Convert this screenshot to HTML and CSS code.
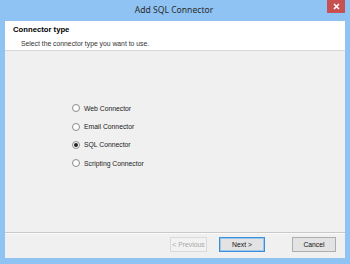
FILE: index.html
```html
<!DOCTYPE html>
<html lang="en">
<head>
    <meta charset="UTF-8">
    <title>Add SQL Connector</title>
    <link rel="stylesheet" href="styles.css">
</head>
<body>
    <div class="window">
        <div class="titlebar">
            <span class="title">Add SQL Connector</span>
            <div class="close-btn">
                <svg width="7" height="7" viewBox="0 0 7 7">
                    <path d="M1 1 L6 6 M6 1 L1 6" stroke="#fff" stroke-width="1.6"/>
                </svg>
            </div>
        </div>
        <div class="client">
            <div class="header">
                <p class="header-title">Connector type</p>
                <p class="header-sub">Select the connector type you want to use.</p>
            </div>
            <div class="content">
                <div class="radio-row"><span class="radio"></span>Web Connector</div>
                <div class="radio-row"><span class="radio"></span>Email Connector</div>
                <div class="radio-row"><span class="radio checked"></span>SQL Connector</div>
                <div class="radio-row"><span class="radio"></span>Scripting Connector</div>
            </div>
            <div class="footer">
                <button class="btn btn-prev" disabled>&lt; Previous</button>
                <button class="btn btn-next">Next &gt;</button>
                <button class="btn btn-cancel">Cancel</button>
            </div>
        </div>
    </div>
</body>
</html>
```

FILE: styles.css
```css
html, body {
    margin: 0;
    padding: 0;
}
body {
    width: 350px;
    height: 264px;
    background: #8fc3f3;
    font-family: "Liberation Sans", Arial, sans-serif;
    font-size: 6.8px;
    color: #1a1a1a;
}
.window {
    width: 350px;
    height: 264px;
    display: flex;
    flex-direction: column;
}
.titlebar {
    position: relative;
    height: 21px;
    display: flex;
    align-items: center;
    justify-content: center;
}
.title {
    font-family: "Noto Sans", "Open Sans", sans-serif;
    font-size: 8.6px;
    color: #2b2b2b;
    margin-top: -1px;
    margin-left: -2px;
}
.close-btn {
    position: absolute;
    top: 0;
    right: 5px;
    width: 18px;
    height: 13px;
    background: #c75050;
    display: flex;
    align-items: center;
    justify-content: center;
}
.client {
    flex: 1;
    margin: 0 5px 6px 5px;
    background: #f0f0f0;
    display: flex;
    flex-direction: column;
}
.header {
    height: 30px;
    background: #fff;
    border-bottom: 1px solid #d8d8d8;
    box-sizing: border-box;
    padding: 4px 0 0 8px;
}
.header p {
    margin: 0;
}
.header-title {
    font-size: 7.7px;
    font-weight: bold;
    color: #000;
    line-height: 10px;
}
.header-sub {
    margin-top: 4px !important;
    padding-left: 8px;
    color: #333;
    line-height: 10px;
}
.content {
    flex: 1;
    padding: 48px 0 0 67px;
}
.radio-row {
    height: 18.4px;
    display: flex;
    align-items: center;
    gap: 4px;
    color: #222;
}
.radio {
    width: 6px;
    height: 6px;
    border: 1px solid #8c8c8c;
    border-radius: 50%;
    background: #fcfcfc;
    display: flex;
    align-items: center;
    justify-content: center;
}
.radio.checked::after {
    content: "";
    width: 4px;
    height: 4px;
    border-radius: 50%;
    background: #222;
}
.footer {
    height: 26px;
    border-top: 1px solid #c9c9c9;
    box-shadow: inset 0 1px 0 #fafafa;
    box-sizing: border-box;
    display: flex;
    align-items: flex-start;
    padding: 4px 9px 0 0;
    justify-content: flex-end;
}
.btn {
    height: 15px;
    padding: 0;
    white-space: nowrap;
    font-family: "Liberation Sans", Arial, sans-serif;
    font-size: 6.8px;
    color: #111;
    background: #e3e3e3;
    border: 1px solid #adadad;
    box-sizing: border-box;
}
.btn-prev {
    width: 37px;
    background: #f2f2f2;
    border-color: #dadada;
    color: #a8a8a8;
}
.btn-next {
    width: 46px;
    margin-left: 12px;
    border-color: #3c8fd6;
    box-shadow: inset 0 0 0 1px #9cc8ef;
}
.btn-cancel {
    width: 44px;
    margin-left: 27px;
}
```
